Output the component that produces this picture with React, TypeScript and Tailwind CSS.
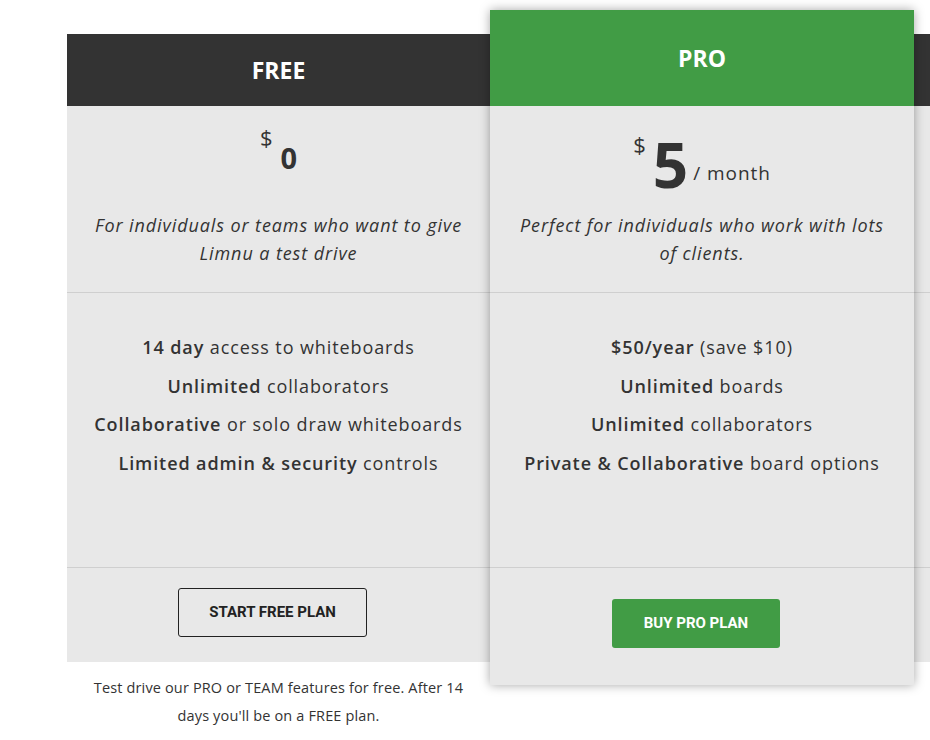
import React from 'react';

const Feature: React.FC<{ bold: string; rest: string }> = ({ bold, rest }) => (
  <p>
    <span className="font-semibold">{bold}</span> {rest}
  </p>
);

export default function App() {
  return (
    <div className="w-[930px] h-[740px] overflow-hidden bg-white text-[#333] font-['Open_Sans',sans-serif]">
      <div className="flex items-start w-max pl-[67px] pt-[10px]">
        {/* FREE plan */}
        <div className="w-[423px] mt-[24px]">
          <div className="h-[72px] bg-[#333] flex items-center justify-center text-white font-bold text-[23px]">
            FREE
          </div>
          <div className="bg-[#e8e8e8]">
            <div className="h-[187px] border-b border-[#cfcfcf] flex flex-col items-center">
              <div className="h-[105px] pt-[20px] flex items-start">
                <span className="text-[22px] leading-none">$</span>
                <span className="text-[29px] leading-none font-bold mt-[17px] ml-[8px]">0</span>
              </div>
              <p className="px-[24px] text-center italic text-[18px] tracking-[0.05em] leading-[28px]">
                For individuals or teams who want to give Limnu a test drive
              </p>
            </div>
            <div className="h-[275px] border-b border-[#cfcfcf] pt-[35px] text-center text-[18px] tracking-[0.05em] leading-[38.5px]">
              <Feature bold="14 day" rest="access to whiteboards" />
              <Feature bold="Unlimited" rest="collaborators" />
              <Feature bold="Collaborative" rest="or solo draw whiteboards" />
              <Feature bold="Limited admin & security" rest="controls" />
            </div>
            <div className="h-[94px] pt-[20px] pr-[12px] flex justify-center">
              <button className="w-[189px] h-[49px] border border-[#222] rounded-[3px] text-[#222] font-['Roboto',sans-serif] font-bold text-[15px]">
                START FREE PLAN
              </button>
            </div>
          </div>
          <p className="mt-[12px] px-[24px] text-center text-[14.5px] tracking-[0.01em] leading-[28px]">
            Test drive our PRO or TEAM features for free. After 14 days you'll be on a FREE plan.
          </p>
        </div>

        {/* PRO plan */}
        <div className="w-[424px] relative z-10 shadow-[0_0_10px_rgba(0,0,0,0.35)]">
          <div className="h-[96px] bg-[#419c45] flex items-center justify-center text-white font-bold text-[23px]">
            PRO
          </div>
          <div className="bg-[#e8e8e8]">
            <div className="h-[187px] border-b border-[#cfcfcf] flex flex-col items-center">
              <div className="h-[105px] pt-[27px] flex items-start">
                <span className="text-[22px] leading-none">$</span>
                <span className="text-[62px] leading-none font-bold ml-[7px]">5</span>
                <span className="text-[19px] tracking-[0.05em] leading-none mt-[31px] ml-[5px]">/ month</span>
              </div>
              <p className="px-[26px] text-center italic text-[18px] tracking-[0.05em] leading-[28px]">
                Perfect for individuals who work with lots of clients.
              </p>
            </div>
            <div className="h-[275px] border-b border-[#cfcfcf] pt-[35px] text-center text-[18px] tracking-[0.05em] leading-[38.5px]">
              <Feature bold="$50/year" rest="(save $10)" />
              <Feature bold="Unlimited" rest="boards" />
              <Feature bold="Unlimited" rest="collaborators" />
              <Feature bold="Private & Collaborative" rest="board options" />
            </div>
            <div className="h-[117px] pt-[31px] pr-[12px] flex justify-center">
              <button className="w-[168px] h-[49px] bg-[#419c45] rounded-[3px] text-white font-['Roboto',sans-serif] font-bold text-[15px]">
                BUY PRO PLAN
              </button>
            </div>
          </div>
        </div>

        {/* TEAM plan (cut off at the edge) */}
        <div className="w-[423px] mt-[24px]">
          <div className="h-[72px] bg-[#333]" />
          <div className="bg-[#e8e8e8]">
            <div className="h-[187px] border-b border-[#cfcfcf]" />
            <div className="h-[275px] border-b border-[#cfcfcf]" />
            <div className="h-[94px]" />
          </div>
        </div>
      </div>
    </div>
  );
}
